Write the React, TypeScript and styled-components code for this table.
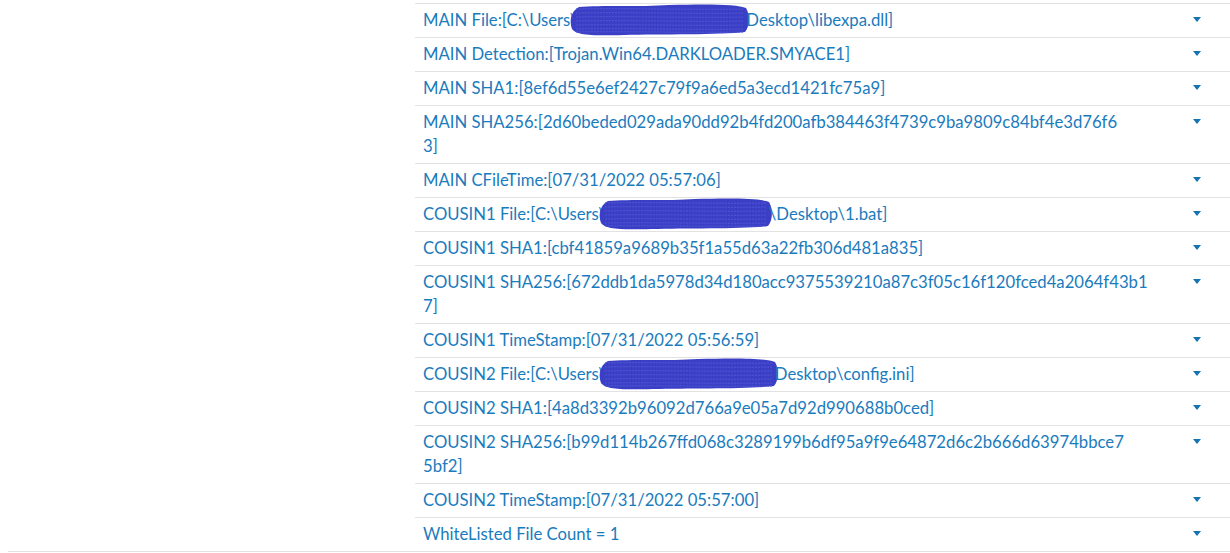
import { createGlobalStyle, styled } from "styled-components"

type Part = string | { blob: number }

// the long hashes wrap where the original table wrapped them
const rows: Part[][] = [
  ["MAIN File:[C:\\Users\\", { blob: 180 }, "Desktop\\libexpa.dll]"],
  ["MAIN Detection:[Trojan.Win64.DARKLOADER.SMYACE1]"],
  ["MAIN SHA1:[8ef6d55e6ef2427c79f9a6ed5a3ecd1421fc75a9]"],
  ["MAIN SHA256:[2d60beded029ada90dd92b4fd200afb384463f4739c9ba9809c84bf4e3d76f6\n3]"],
  ["MAIN CFileTime:[07/31/2022 05:57:06]"],
  ["COUSIN1 File:[C:\\Users\\", { blob: 174 }, "\\Desktop\\1.bat]"],
  ["COUSIN1 SHA1:[cbf41859a9689b35f1a55d63a22fb306d481a835]"],
  ["COUSIN1 SHA256:[672ddb1da5978d34d180acc9375539210a87c3f05c16f120fced4a2064f43b1\n7]"],
  ["COUSIN1 TimeStamp:[07/31/2022 05:56:59]"],
  ["COUSIN2 File:[C:\\Users\\", { blob: 180 }, "Desktop\\config.ini]"],
  ["COUSIN2 SHA1:[4a8d3392b96092d766a9e05a7d92d990688b0ced]"],
  ["COUSIN2 SHA256:[b99d114b267ffd068c3289199b6df95a9f9e64872d6c2b666d63974bbce7\n5bf2]"],
  ["COUSIN2 TimeStamp:[07/31/2022 05:57:00]"],
  ["WhiteListed File Count = 1"],
]

const Scribble = ({ width }: { width: number }) => {
  const w = width
  return (
    <Blob width={w} height={32} viewBox={`0 0 ${w} 32`}>
      <path
        d={`M9 3 C30 1 70 3 ${w * 0.55} 1 C${w * 0.75} 0 ${w - 12} 0 ${w - 4} 4
          C${w} 10 ${w} 23 ${w - 5} 28 C${w - 30} 31 ${w * 0.5} 30 ${w * 0.3} 31
          C20 32 6 31 2 25 C-1 17 1 7 9 3 Z`}
        fill="#3b3fc5"
      />
      {[5, 9, 13, 17, 21, 25, 28].map((y) => (
        <path
          key={y}
          d={`M6 ${y} C${w * 0.3} ${y - 1} ${w * 0.7} ${y + 1} ${w - 6} ${y}`}
          stroke="#5058d4"
          strokeWidth="1"
          strokeDasharray="2 1"
          fill="none"
        />
      ))}
    </Blob>
  )
}

export default function App() {
  return (
    <>
      <GlobalStyle />
      <Page>
        <Spacer />
        <Table>
          {rows.map((parts, i) => (
            <TableRow key={i}>
              <Cell>
                {parts.map((p, j) =>
                  typeof p === "string" ? <span key={j}>{p}</span> : <Scribble key={j} width={p.blob} />
                )}
              </Cell>
              <ArrowCell>
                <Caret />
              </ArrowCell>
            </TableRow>
          ))}
        </Table>
      </Page>
    </>
  )
}

const GlobalStyle = createGlobalStyle`
  body {
    margin: 0;
    background: #ffffff;
    font-family: Lato, "Open Sans", sans-serif;
  }
`
const Page = styled.div`
  display: grid;
  grid-template-columns: 407px 1fr;
  margin-left: 8px;
  padding-top: 3px;
  border-bottom: 1px solid #e2e2e2;
`
const Spacer = styled.div``
const Table = styled.div`
  display: flex;
  flex-direction: column;
`
const TableRow = styled.div`
  display: flex;
  border-top: 1px solid #e2e2e2;
`
const Cell = styled.div`
  flex: 1;
  padding: 4px 8px 5px 8px;
  font-size: 16.7px;
  line-height: 24px;
  color: #1a7bbd;
  white-space: pre-line;
  word-break: break-all;
`
const ArrowCell = styled.div`
  width: 66px;
  display: flex;
  justify-content: center;
  padding-top: 13px;
`
const Caret = styled.div`
  width: 0;
  height: 0;
  border-left: 4px solid transparent;
  border-right: 4px solid transparent;
  border-top: 5px solid #1473b3;
`
const Blob = styled.svg`
  display: inline-block;
  vertical-align: middle;
  margin: -10px -4px -6px -7px;
`
